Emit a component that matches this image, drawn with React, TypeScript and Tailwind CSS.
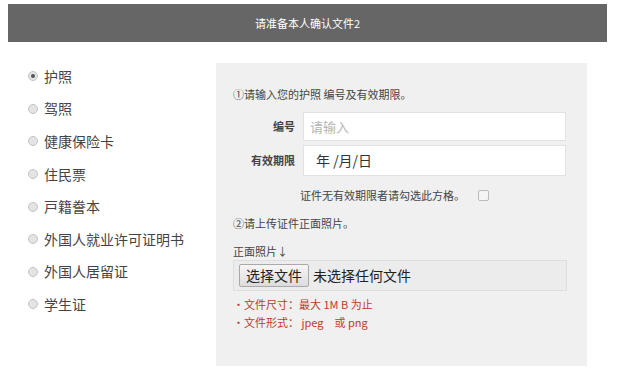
import React from 'react';

const docs = ['护照', '驾照', '健康保险卡', '住民票', '戸籍誊本', '外国人就业许可证明书', '外国人居留证', '学生证'];

export default function App() {
  return (
    <div className="w-[628px] h-[384px] bg-white pt-[4px] px-[8px] text-[#333] font-['Noto_Sans_CJK_SC',sans-serif] overflow-hidden">
      {/* header bar */}
      <div className="h-[38px] w-[599px] bg-[#666666] flex items-center justify-center text-white text-[11px]">
        请准备本人确认文件2
      </div>

      <div className="flex items-start">
        {/* document type list */}
        <div className="w-[208px] mt-[18px] pl-[20px]">
          {docs.map((d, i) => (
            <label key={d} className="h-[32.6px] flex items-center gap-[6px] text-[14px] text-[#444]">
              <span className="w-[10px] h-[10px] rounded-full border border-[#c4c4c4] bg-[#e4e4e4] flex items-center justify-center">
                {i === 0 && <span className="w-[4px] h-[4px] rounded-full bg-[#555]" />}
              </span>
              {d}
            </label>
          ))}
        </div>

        {/* form panel */}
        <div className="mt-[21px] w-[371px] h-[303px] bg-[#f0f0f0] pl-[17px] pt-[23px] text-[11px]">
          <div className="h-[16px] flex items-center text-[#444]">①请输入您的护照 编号及有效期限。</div>

          <div className="mt-[10px] flex items-center">
            <div className="w-[62px] text-right font-bold text-[#444]">编号</div>
            <div className="ml-[8px] w-[263px] h-[29px] bg-white border border-[#e2e2e2] flex items-center px-[6px] text-[13px] text-[#b5b5b5]">
              请输入
            </div>
          </div>
          <div className="mt-[4px] flex items-center">
            <div className="w-[62px] text-right font-bold text-[#444]">有效期限</div>
            <div className="ml-[8px] w-[263px] h-[31px] bg-white border border-[#e2e2e2] flex items-center px-[12px] text-[14px] text-[#333]">
              年 /月/日
            </div>
          </div>

          <div className="mt-[11px] h-[16px] flex items-center pl-[67px] text-[#444]">
            证件无有效期限者请勾选此方格。
            <span className="ml-[13px] w-[11px] h-[11px] border border-[#bbb] rounded-[2px] bg-[#f4f4f4]" />
          </div>

          <div className="mt-[12px] h-[16px] flex items-center text-[#444]">②请上传证件正面照片。</div>
          <div className="mt-[13px] h-[14px] flex items-center text-[#444]">正面照片↓</div>

          <div className="mt-[2px] w-[334px] h-[31px] bg-[#ececec] border border-[#dedede] flex items-center px-[5px] gap-[4px] text-[14px] text-[#222]">
            <span className="h-[23px] px-[6px] border border-[#a9a9a9] rounded-[2px] bg-gradient-to-b from-[#f6f6f6] to-[#dcdcdc] flex items-center">
              选择文件
            </span>
            未选择任何文件
          </div>

          <div className="mt-[4px] text-[#c0392b] leading-[18px]">
            <div>・文件尺寸：最大 1M B 为止</div>
            <div>・文件形式： jpeg　或 png</div>
          </div>
        </div>
      </div>
    </div>
  );
}
